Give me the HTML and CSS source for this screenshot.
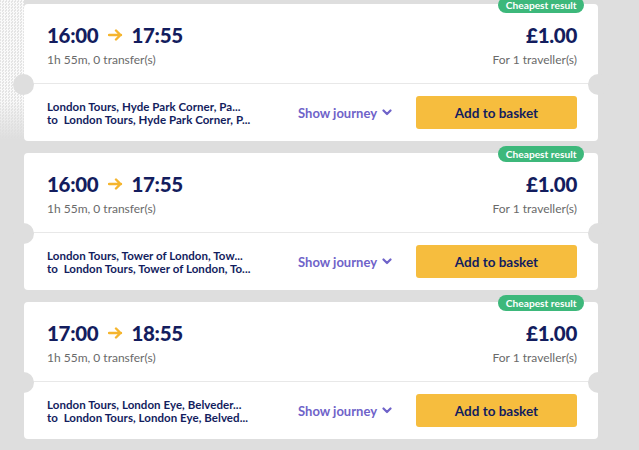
FILE: index.html
```html
<!DOCTYPE html>
<html lang="en">
<head>
<meta charset="utf-8">
<title>Results</title>
<link rel="stylesheet" href="styles.css">
</head>
<body>
<div class="speckle"></div>
<div class="list">
  <div class="card">
    <span class="badge">Cheapest result</span>
    <div class="card-top">
      <div class="times">
        <div class="time-row">
          <span class="time">16:00</span>
          <svg class="arrow" width="15" height="12" viewBox="0 0 15 12"><path d="M1 6h12M8 1.5l4.5 4.5L8 10.5" fill="none" stroke="#f5b52e" stroke-width="2.4" stroke-linecap="round" stroke-linejoin="round"/></svg>
          <span class="time">17:55</span>
        </div>
        <div class="sub">1h 55m, 0 transfer(s)</div>
      </div>
      <div class="price-box">
        <div class="price">£1.00</div>
        <div class="sub">For 1 traveller(s)</div>
      </div>
    </div>
    <div class="card-bottom">
      <div class="stops">
        <div>London Tours, Hyde Park Corner, Pa...</div>
        <div>to&nbsp; London Tours, Hyde Park Corner, P...</div>
      </div>
      <div class="show">Show journey <svg class="chev" width="10" height="7" viewBox="0 0 10 7"><path d="M1.5 1.5L5 5l3.5-3.5" fill="none" stroke="#6f63c9" stroke-width="2.2" stroke-linecap="round" stroke-linejoin="round"/></svg></div>
      <div class="btn">Add to basket</div>
    </div>
  </div>

  <div class="card">
    <span class="badge">Cheapest result</span>
    <div class="card-top">
      <div class="times">
        <div class="time-row">
          <span class="time">16:00</span>
          <svg class="arrow" width="15" height="12" viewBox="0 0 15 12"><path d="M1 6h12M8 1.5l4.5 4.5L8 10.5" fill="none" stroke="#f5b52e" stroke-width="2.4" stroke-linecap="round" stroke-linejoin="round"/></svg>
          <span class="time">17:55</span>
        </div>
        <div class="sub">1h 55m, 0 transfer(s)</div>
      </div>
      <div class="price-box">
        <div class="price">£1.00</div>
        <div class="sub">For 1 traveller(s)</div>
      </div>
    </div>
    <div class="card-bottom">
      <div class="stops">
        <div>London Tours, Tower of London, Tow...</div>
        <div>to&nbsp; London Tours, Tower of London, To...</div>
      </div>
      <div class="show">Show journey <svg class="chev" width="10" height="7" viewBox="0 0 10 7"><path d="M1.5 1.5L5 5l3.5-3.5" fill="none" stroke="#6f63c9" stroke-width="2.2" stroke-linecap="round" stroke-linejoin="round"/></svg></div>
      <div class="btn">Add to basket</div>
    </div>
  </div>

  <div class="card">
    <span class="badge">Cheapest result</span>
    <div class="card-top">
      <div class="times">
        <div class="time-row">
          <span class="time">17:00</span>
          <svg class="arrow" width="15" height="12" viewBox="0 0 15 12"><path d="M1 6h12M8 1.5l4.5 4.5L8 10.5" fill="none" stroke="#f5b52e" stroke-width="2.4" stroke-linecap="round" stroke-linejoin="round"/></svg>
          <span class="time">18:55</span>
        </div>
        <div class="sub">1h 55m, 0 transfer(s)</div>
      </div>
      <div class="price-box">
        <div class="price">£1.00</div>
        <div class="sub">For 1 traveller(s)</div>
      </div>
    </div>
    <div class="card-bottom">
      <div class="stops">
        <div>London Tours, London Eye, Belveder...</div>
        <div>to&nbsp; London Tours, London Eye, Belved...</div>
      </div>
      <div class="show">Show journey <svg class="chev" width="10" height="7" viewBox="0 0 10 7"><path d="M1.5 1.5L5 5l3.5-3.5" fill="none" stroke="#6f63c9" stroke-width="2.2" stroke-linecap="round" stroke-linejoin="round"/></svg></div>
      <div class="btn">Add to basket</div>
    </div>
  </div>
</div>
</body>
</html>
```

FILE: styles.css
```css
html, body {
  margin: 0;
  padding: 0;
}
body {
  background: #dedede;
  font-family: Lato, "Noto Sans", sans-serif;
  width: 639px;
  height: 450px;
  overflow: hidden;
  position: relative;
}
.speckle {
  position: absolute;
  left: 0;
  top: 0;
  width: 24px;
  height: 140px;
  background-color: #f2f2f2;
  background-image: repeating-conic-gradient(#fafafa 0 25%, #e4e4e4 0 50%);
  background-size: 3px 3px;
  -webkit-mask-image: linear-gradient(to bottom, #000 70%, transparent);
  mask-image: linear-gradient(to bottom, #000 70%, transparent);
}
.list {
  position: relative;
  display: flex;
  flex-direction: column;
  gap: 12px;
  padding: 4px 0 0 24px;
  width: 574px;
}
.card {
  position: relative;
  background: #fff;
  border-radius: 4px;
  height: 137px;
  display: flex;
  flex-direction: column;
}
.card::before,
.card::after {
  content: "";
  position: absolute;
  top: 70px;
  width: 21px;
  height: 21px;
  border-radius: 50%;
  background: #dedede;
}
.card::before { left: -11px; }
.card::after { right: -11px; }
.badge {
  position: absolute;
  top: -7px;
  right: 14px;
  height: 16px;
  line-height: 16px;
  padding: 0 7.5px;
  border-radius: 8px;
  background: #3db87b;
  color: #fff;
  font-size: 10.2px;
  font-weight: 700;
}
.card-top {
  height: 80px;
  box-sizing: border-box;
  padding: 17px 21px 0 23px;
  display: flex;
  justify-content: space-between;
  border-bottom: 1px solid #e8e8e8;
}
.time-row {
  display: flex;
  align-items: center;
  height: 28px;
}
.time, .price {
  font-size: 20.5px;
  font-weight: 900;
  color: #131d5e;
  line-height: 28px;
  letter-spacing: -0.3px;
}
.arrow {
  margin: 0 8px 0 10px;
}
.sub {
  font-size: 12px;
  color: #6a6a6a;
  line-height: 16px;
  margin-top: 3px;
}
.price-box {
  text-align: right;
}
.card-bottom {
  flex: 1;
  display: flex;
  align-items: center;
  padding: 0 21px 0 23px;
}
.stops {
  flex: 1;
  font-size: 11.5px;
  font-weight: 700;
  color: #131d5e;
  line-height: 13px;
  letter-spacing: 0.05px;
}
.show {
  font-size: 13px;
  font-weight: 700;
  color: #6f63c9;
  display: flex;
  align-items: center;
  gap: 5px;
  margin-right: 24px;
}
.btn {
  width: 161px;
  height: 33px;
  border-radius: 3px;
  background: #f6bd3e;
  color: #131d5e;
  font-weight: 700;
  font-size: 13.5px;
  display: flex;
  align-items: center;
  justify-content: center;
}
```
